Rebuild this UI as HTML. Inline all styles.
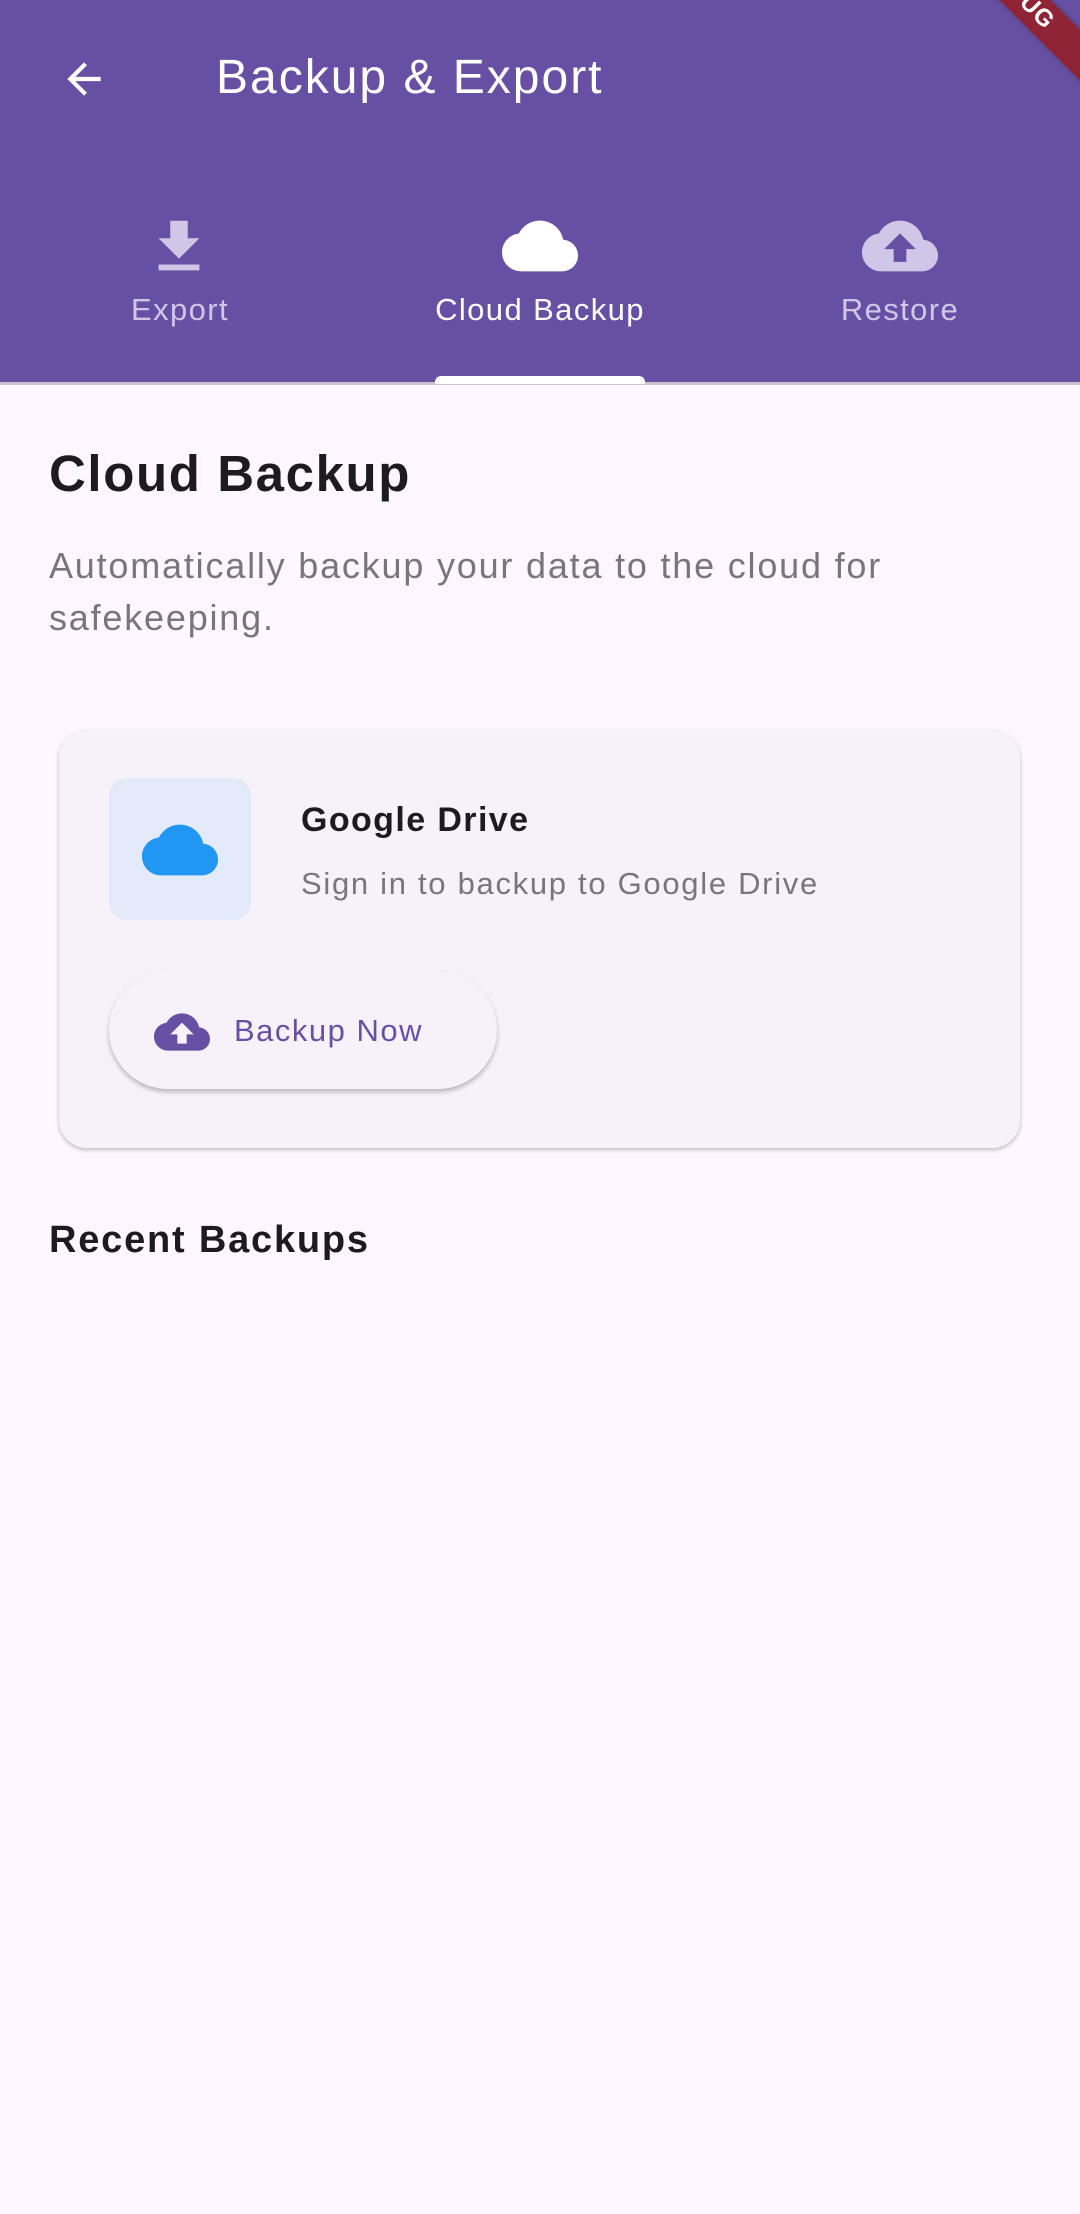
<!DOCTYPE html>
<html><head><meta charset="utf-8"><style>
*{margin:0;padding:0;box-sizing:border-box}
body{width:1080px;height:2214px;background:#FEF7FF;font-family:"Liberation Sans",Roboto,sans-serif;position:relative;overflow:hidden}
.bar{position:absolute;left:0;top:0;width:1080px;height:382px;background:#6750A4}
.line{position:absolute;left:0;top:382px;width:1080px;height:3px;background:#CAC4D0}
.ind{position:absolute;left:435px;top:376px;width:210px;height:8px;background:#fff;border-radius:6px 6px 0 0}
.title{position:absolute;left:216px;top:50px;font-size:48px;color:#fff;line-height:56px;letter-spacing:2px}
.tab{position:absolute;top:292px;width:360px;text-align:center;font-size:31px;color:#D0C6E8;font-weight:500;letter-spacing:1.4px}
.ribbon{position:absolute;left:888px;top:-25px;width:260px;height:36px;background:#8E2436;transform:rotate(45deg);color:#fff;font-weight:bold;font-size:24px;text-align:center;line-height:36px;letter-spacing:1px;box-shadow:0 0 6px rgba(0,0,0,.3)}
.h1{position:absolute;left:49px;top:444px;font-size:51px;font-weight:bold;color:#1D1B20;letter-spacing:1.6px}
.desc{position:absolute;left:49px;top:540px;font-size:36px;line-height:52px;color:#79747E;width:960px;letter-spacing:1.8px}
.card{position:absolute;left:59px;top:730px;width:961px;height:418px;background:#F7F2FA;border-radius:28px;box-shadow:0 2px 4px rgba(0,0,0,.25)}
.ibox{position:absolute;left:109px;top:778px;width:142px;height:142px;background:#E3EAF9;border-radius:18px}
.gd{position:absolute;left:301px;top:801px;font-size:34px;font-weight:bold;color:#1D1B20;letter-spacing:1.4px}
.sub{position:absolute;left:301px;top:866px;font-size:31px;color:#79747E;letter-spacing:1.7px}
.btn{position:absolute;left:109px;top:971px;width:388px;height:118px;background:#F7F2FA;border-radius:59px;box-shadow:0 3px 5px rgba(0,0,0,.25)}
.btxt{position:absolute;left:234px;top:1013px;font-size:31px;font-weight:500;color:#6750A4;letter-spacing:1.5px}
.h2{position:absolute;left:49px;top:1219px;font-size:38px;font-weight:bold;color:#1D1B20;letter-spacing:1.8px}
</style></head><body>
<div class="bar"></div>
<div class="line"></div>
<div class="ind"></div>
<svg style="position:absolute;left:56px;top:54px" width="56" height="50" viewBox="0 0 24 24"><path d="M20 11H7.83l5.59-5.59L12 4l-8 8 8 8 1.41-1.41L7.83 13H20v-2z" fill="#fff"/></svg>
<div class="title">Backup &amp; Export</div>
<svg style="position:absolute;left:144px;top:212px" width="70" height="70" viewBox="0 0 24 24"><path d="M19 9h-4V3H9v6H5l7 7 7-7zM5 18v2h14v-2H5z" fill="#D0C6E8"/></svg>
<svg style="position:absolute;left:502px;top:208px" width="76" height="76" viewBox="0 0 24 24"><path d="M19.35 10.04C18.67 6.59 15.64 4 12 4 9.11 4 6.6 5.64 5.35 8.04 2.34 8.36 0 10.91 0 14c0 3.31 2.69 6 6 6h13c2.76 0 5-2.24 5-5 0-2.64-2.05-4.78-4.65-4.96z" fill="#fff"/></svg>
<svg style="position:absolute;left:862px;top:208px" width="76" height="76" viewBox="0 0 24 24"><path d="M19.35 10.04C18.67 6.59 15.64 4 12 4 9.11 4 6.6 5.64 5.35 8.04 2.34 8.36 0 10.91 0 14c0 3.31 2.69 6 6 6h13c2.76 0 5-2.24 5-5 0-2.64-2.05-4.78-4.65-4.96zM14 13v4h-4v-4H7l5-5 5 5h-3z" fill="#D0C6E8"/></svg>
<div class="tab" style="left:0">Export</div>
<div class="tab" style="left:360px;color:#fff">Cloud Backup</div>
<div class="tab" style="left:720px">Restore</div>
<div class="ribbon">DEBUG</div>
<div class="h1">Cloud Backup</div>
<div class="desc">Automatically backup your data to the cloud for safekeeping.</div>
<div class="card"></div>
<div class="ibox"></div>
<svg style="position:absolute;left:142px;top:812px" width="76" height="76" viewBox="0 0 24 24"><path d="M19.35 10.04C18.67 6.59 15.64 4 12 4 9.11 4 6.6 5.64 5.35 8.04 2.34 8.36 0 10.91 0 14c0 3.31 2.69 6 6 6h13c2.76 0 5-2.24 5-5 0-2.64-2.05-4.78-4.65-4.96z" fill="#2196F3"/></svg>
<div class="gd">Google Drive</div>
<div class="sub">Sign in to backup to Google Drive</div>
<div class="btn"></div>
<svg style="position:absolute;left:154px;top:1004px" width="56" height="56" viewBox="0 0 24 24"><path d="M19.35 10.04C18.67 6.59 15.64 4 12 4 9.11 4 6.6 5.64 5.35 8.04 2.34 8.36 0 10.91 0 14c0 3.31 2.69 6 6 6h13c2.76 0 5-2.24 5-5 0-2.64-2.05-4.78-4.65-4.96zM14 13v4h-4v-4H7l5-5 5 5h-3z" fill="#6750A4"/></svg>
<div class="btxt">Backup Now</div>
<div class="h2">Recent Backups</div>
</body></html>
